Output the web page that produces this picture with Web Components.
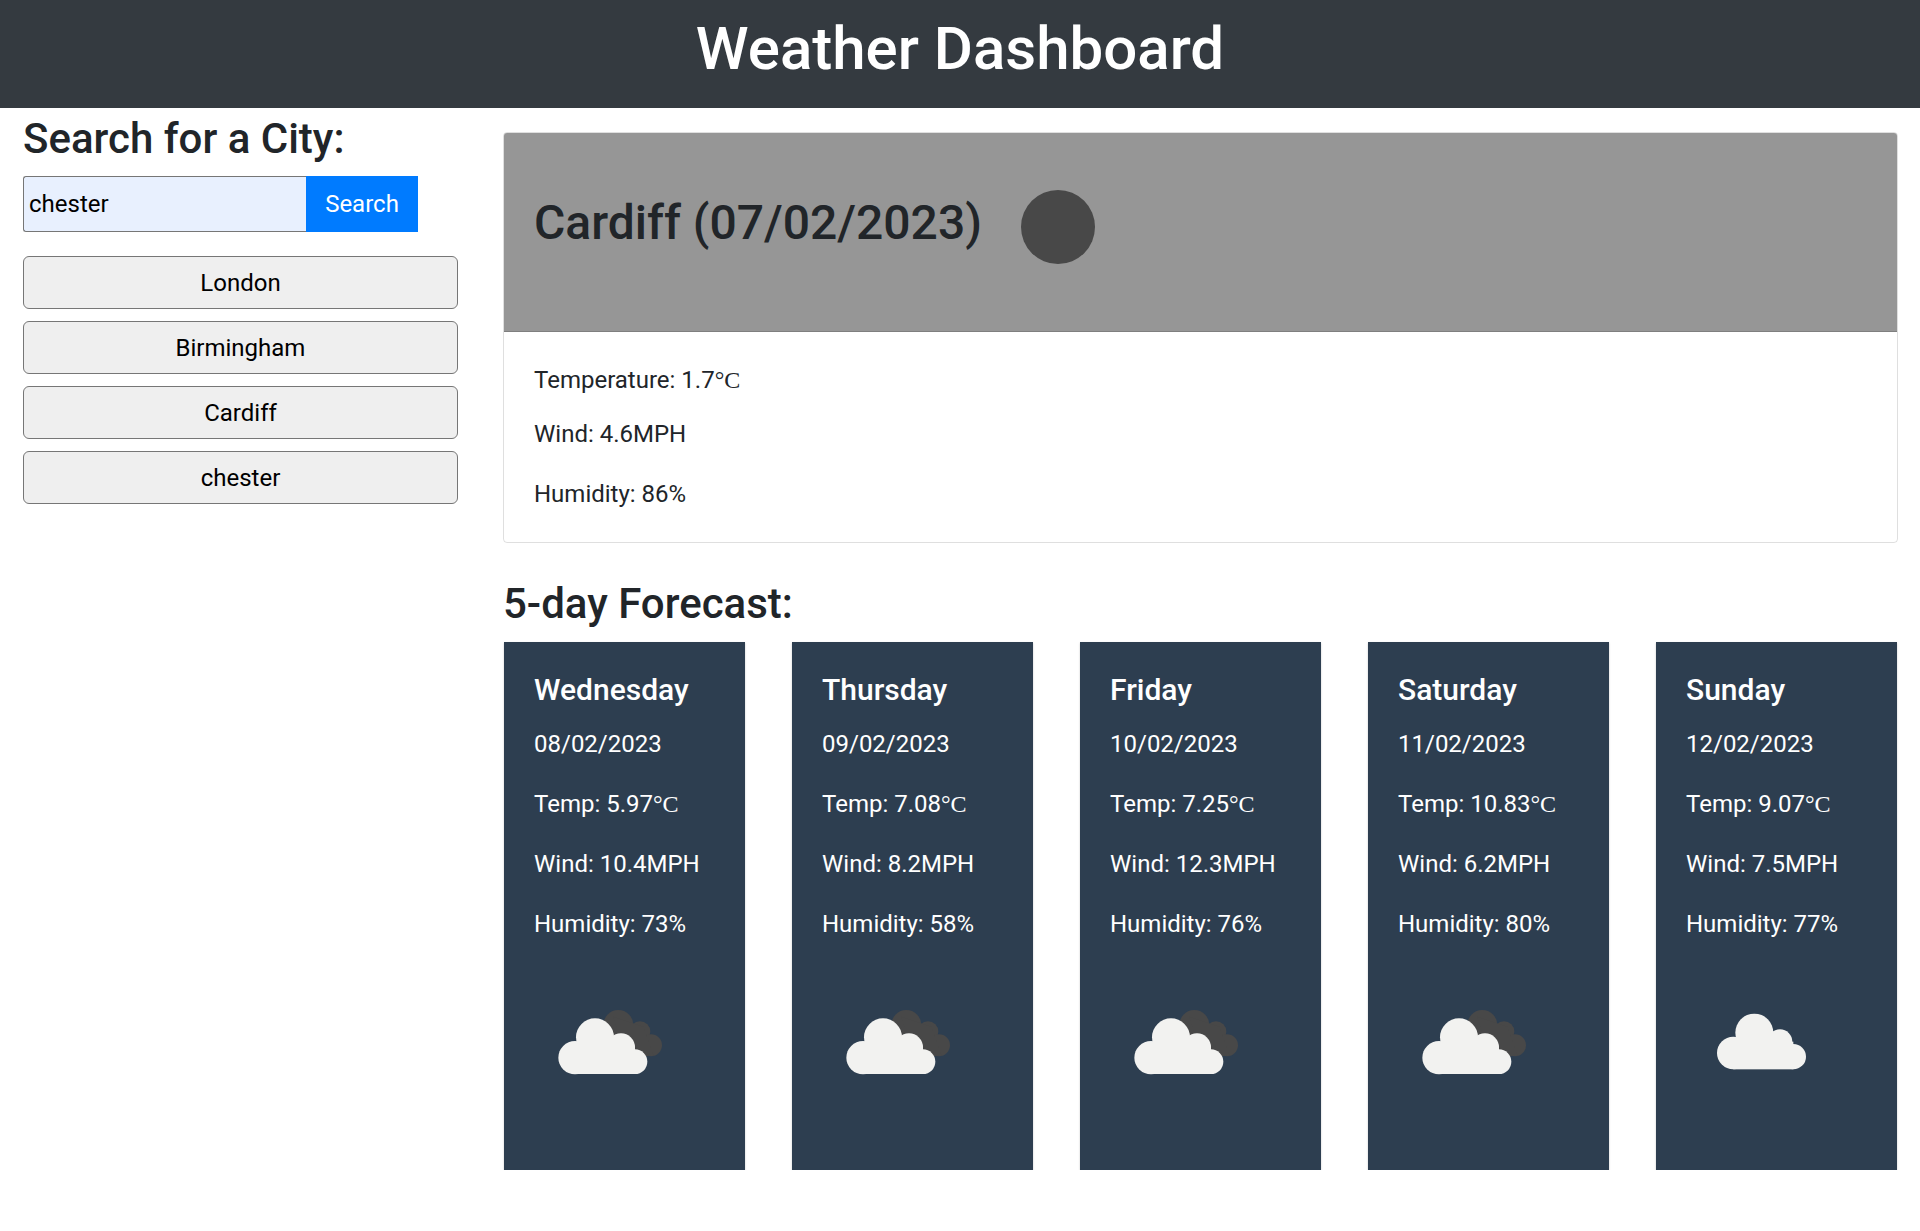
<!DOCTYPE html>
<html lang="en">
<head>
<meta charset="utf-8">
<title>Weather Dashboard</title>
<style>
  html, body { margin: 0; background: #fff; }
  body { font: 400 24px/1.5 Roboto, "Liberation Serif", serif; color: #212529; }
</style>
</head>
<body>
<weather-app>
  <app-header slot="header">Weather Dashboard</app-header>
  <city-search slot="side">
    <city-button>London</city-button>
    <city-button>Birmingham</city-button>
    <city-button>Cardiff</city-button>
    <city-button>chester</city-button>
  </city-search>
  <main-panel slot="main">
    <current-weather city="Cardiff (07/02/2023)">
      <p-line gap="18">Temperature: 1.7<deg-c>°C</deg-c></p-line>
      <p-line gap="24">Wind: 4.6MPH</p-line>
      <p-line gap="0">Humidity: 86%</p-line>
    </current-weather>
    <forecast-list slot="forecast">
      <forecast-card day="Wednesday" icon="04d">
        <p-line>08/02/2023</p-line><p-line>Temp: 5.97<deg-c>°C</deg-c></p-line><p-line>Wind: 10.4MPH</p-line><p-line>Humidity: 73%</p-line>
      </forecast-card>
      <forecast-card day="Thursday" icon="04d">
        <p-line>09/02/2023</p-line><p-line>Temp: 7.08<deg-c>°C</deg-c></p-line><p-line>Wind: 8.2MPH</p-line><p-line>Humidity: 58%</p-line>
      </forecast-card>
      <forecast-card day="Friday" icon="04d">
        <p-line>10/02/2023</p-line><p-line>Temp: 7.25<deg-c>°C</deg-c></p-line><p-line>Wind: 12.3MPH</p-line><p-line>Humidity: 76%</p-line>
      </forecast-card>
      <forecast-card day="Saturday" icon="04d">
        <p-line>11/02/2023</p-line><p-line>Temp: 10.83<deg-c>°C</deg-c></p-line><p-line>Wind: 6.2MPH</p-line><p-line>Humidity: 80%</p-line>
      </forecast-card>
      <forecast-card day="Sunday" icon="03d">
        <p-line>12/02/2023</p-line><p-line>Temp: 9.07<deg-c>°C</deg-c></p-line><p-line>Wind: 7.5MPH</p-line><p-line>Humidity: 77%</p-line>
      </forecast-card>
    </forecast-list>
  </main-panel>
</weather-app>

<script>
// Small helper: every element is just a shadow root with fixed markup.
function define(name, html, setup) {
  customElements.define(name, class extends HTMLElement {
    connectedCallback() {
      if (this.shadowRoot) return;
      const root = this.attachShadow({ mode: "open" });
      root.innerHTML = html;
      if (setup) setup(this, root);
    }
  });
}

define("weather-app", `
  <style>
    :host { display: block; }
    .cols { display: grid; grid-template-columns: 480px 1fr; }
  </style>
  <slot name="header"></slot>
  <div class="cols"><slot name="side"></slot><slot name="main"></slot></div>
`);

define("app-header", `
  <style>
    :host { display: block; height: 108px; background: #343a40; color: #fff; text-align: center;
            font-size: 60px; font-weight: 500; line-height: 72px; padding-top: 13px; box-sizing: border-box; }
  </style>
  <slot></slot>
`);

define("city-search", `
  <style>
    :host { display: block; padding: 6px 22px 0 23px; }
    h3 { margin: 0 0 12px; font-size: 42px; font-weight: 500; line-height: 50px; }
    form { display: flex; margin: 0 0 24px; }
    input { width: 283px; height: 56px; box-sizing: border-box; font: inherit; color: #000; background: #e8f0fe;
            border: 1px solid #767676; border-right: 0; border-radius: 3px 0 0 3px; padding: 0 5px; outline: 0; }
    button { width: 112px; height: 56px; font: inherit; color: #fff; background: #007bff; border: 0; padding: 0; }
    .list { display: flex; flex-direction: column; gap: 12px; }
  </style>
  <h3>Search for a City:</h3>
  <form><input value="chester"><button type="button">Search</button></form>
  <div class="list"><slot></slot></div>
`);

define("city-button", `
  <style>
    :host { display: block; }
    button { display: block; width: 100%; height: 53px; box-sizing: border-box; font: inherit; color: #000;
             background: #efefef; border: 1px solid #767676; border-radius: 6px; padding: 0; }
  </style>
  <button><slot></slot></button>
`);

define("main-panel", `
  <style>
    :host { display: block; padding: 24px 22px 0 23px; }
    h3 { margin: 36px 0 13px; font-size: 42px; font-weight: 500; line-height: 50px; }
  </style>
  <slot></slot>
  <h3>5-day Forecast:</h3>
  <slot name="forecast"></slot>
`);

define("current-weather", `
  <style>
    :host { display: block; border: 1px solid rgba(0,0,0,.125); border-radius: 4px; overflow: hidden; }
    header { display: flex; align-items: center; height: 199px; box-sizing: border-box; padding: 0 30px 0;
             background: #969696; border-bottom: 1px solid #7f7f7f; }
    h2 { margin: 0 39px 18px 0; font-size: 48px; font-weight: 500; line-height: 58px; }
    .icon { width: 74px; height: 74px; margin-bottom: 10px; border-radius: 50%; background: #484848; }
    .body { padding: 30px; }
  </style>
  <header><h2></h2><div class="icon"></div></header>
  <div class="body"><slot></slot></div>
`, (el, root) => { root.querySelector("h2").textContent = el.getAttribute("city"); });

define("p-line", `
  <style>
    :host { display: block; line-height: 36px; height: 36px; }
  </style>
  <slot></slot>
`, (el) => {
  const gap = el.getAttribute("gap");
  el.style.marginBottom = (gap === null ? 24 : +gap) + "px";
});

// Inline host: no whitespace around the slot or it renders as a gap before the unit.
define("deg-c", `<style>:host { display: inline; font-family: "Liberation Serif", serif; }</style><slot></slot>`);

define("forecast-list", `
  <style>
    :host { display: flex; justify-content: space-between; margin: 0 1px; }
  </style>
  <slot></slot>
`);

// Cloud shapes are in the same units for both icons; 04d has the dark cloud behind.
const clouds = {
  "04d": `
    <g fill="#484848">
      <circle cx="355" cy="195" r="45"/><circle cx="420" cy="215" r="31"/><circle cx="453" cy="256" r="33"/>
      <path d="M340 170L430 200L460 285L380 300Z"/>
    </g>
    <g fill="#f2f2f0">
      <circle cx="225" cy="293" r="50"/><circle cx="285" cy="232" r="57"/>
      <circle cx="363" cy="262" r="42"/><circle cx="405" cy="305" r="37"/>
      <rect x="225" y="260" width="180" height="82"/>
    </g>`,
  "03d": `
    <g fill="#f2f2f0">
      <circle cx="250" cy="279" r="49"/><circle cx="313" cy="218" r="57"/>
      <circle cx="390" cy="245" r="37"/><circle cx="430" cy="290" r="38"/>
      <rect x="250" y="245" width="180" height="83"/>
    </g>`
};

define("forecast-card", `
  <style>
    :host { display: block; width: 241px; height: 528px; box-sizing: border-box; padding: 30px 30px 0;
            background: #2d3e50; color: #fff; box-shadow: 0 1px 2px rgba(0,0,0,.2); }
    h4 { margin: 0 0 18px; font-size: 30px; font-weight: 500; line-height: 36px; }
    svg { display: block; margin: 62px 0 0 16px; }
    :host([icon="03d"]) svg { margin-left: 14px; }
  </style>
  <h4></h4>
  <slot></slot>
  <svg width="120" height="80" viewBox="150 132 360 240"></svg>
`, (el, root) => {
  root.querySelector("h4").textContent = el.getAttribute("day");
  root.querySelector("svg").innerHTML = clouds[el.getAttribute("icon")];
});
</script>
</body>
</html>
